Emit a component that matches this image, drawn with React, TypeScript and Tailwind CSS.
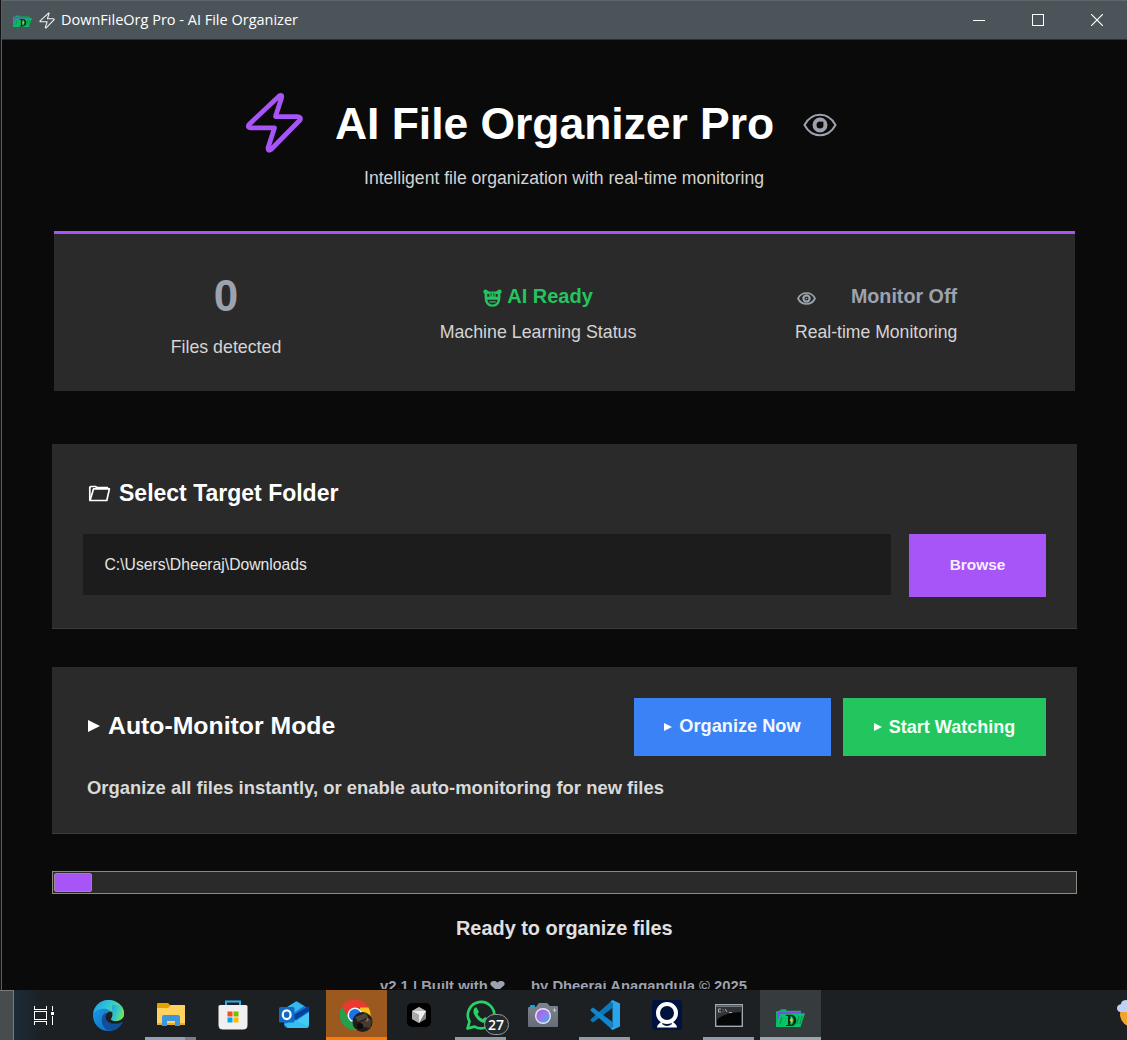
import React from "react";

function BoltIcon({ className, stroke, width }: { className: string; stroke: string; width: number }) {
  return (
    <svg className={className} viewBox="0 0 58 62" fill="none" stroke={stroke} strokeWidth={width} strokeLinejoin="round">
      <path d="M34.500 3.800 4 32.500Q2 35.500 5.500 35.800L29.500 35.800 23 56Q23 59.500 26 57.500L55 28Q56.500 25 52 24.600L30.500 24.600 36.500 6Q37.500 2.500 34.500 3.800Z" />
    </svg>
  );
}

function BigEye() {
  return (
    <svg className="h-[24px] w-[34px]" viewBox="0 0 34 24" fill="none" stroke="#9ca3af">
      <path d="M1.500 12C5 5.500 10.500 1.800 17 1.800S29 5.500 32.500 12C29 18.500 23.500 22.200 17 22.200S5 18.500 1.500 12Z" strokeWidth="2" />
      <circle cx="17" cy="12" r="5.500" strokeWidth="4" />
      <path d="M17.500 11.500 20 9" stroke="#0a0a0a" strokeWidth="2.400" />
    </svg>
  );
}

function SmallEye() {
  return (
    <svg className="h-[13px] w-[19px]" viewBox="0 0 19 13" fill="none" stroke="#9ca3af">
      <path d="M1 6.500C3 2.500 6 1 9.500 1S16 2.500 18 6.500C16 10.500 13 12 9.500 12S3 10.500 1 6.500Z" strokeWidth="1.700" />
      <circle cx="9.500" cy="6.500" r="3.100" strokeWidth="2.200" />
      <circle cx="9.500" cy="6.500" r=".8" fill="#9ca3af" stroke="none" />
    </svg>
  );
}

function BearIcon() {
  return (
    <svg className="h-[18px] w-[19px]" viewBox="0 0 19 18">
      <path fill="#22c55e" d="M.5 1.500Q2.500-.5 4.500 1.500L6 2.500H13L14.500 1.500Q16.500-.5 18.500 1.500 19 4 17.300 5.200 18.500 17.800 9.500 17.800T1.700 5.200Q0 4 .5 1.500Z" />
      <path fill="#2a2a2a" d="M4.300 5H6.300V7.800H4.300ZM14.700 5H12.700V7.800H14.700ZM4.300 10.800H14.700Q13.800 15.500 9.500 15.500T4.300 10.800ZM7.700 3.800H8.500V7.500H7.700ZM10.500 3.800H11.300V7.500H10.500Z" />
      <path fill="#22c55e" d="M6.300 12.300H12.700V13.500H6.300Z" />
    </svg>
  );
}

function FolderIcon() {
  return (
    <svg className="h-[17px] w-[23px]" viewBox="0 0 23 17" fill="none" stroke="#fff" strokeLinejoin="round">
      <path d="M1.800 15.500V2.200L3 1.500H7.500L9 2.700H19.500V4" strokeWidth="1.700" />
      <path d="M2 15.500 5.500 3.900H21.400L18.800 15.500Z" strokeWidth="1.700" />
    </svg>
  );
}

function Play({ className }: { className: string }) {
  return (
    <svg className={className} viewBox="0 0 12 12">
      <path d="M0 0 12 6 0 12Z" fill="#fff" />
    </svg>
  );
}

function AppFolder({ className }: { className: string }) {
  return (
    <svg className={className} viewBox="0 0 29 19">
      <path d="M0 2.500 4 1.500 5 .2H10L11 1.700H25V5L24 18H0Z" fill="#07b765" />
      <path d="M2 3H25V6H4L2 12Z" fill="#7c4bea" />
      <path d="M4 5.200 29 4.200 24.500 18H0Z" fill="#08c468" />
      <path d="M6 8 4 15M23 7 21 15M26 7 24 15" stroke="#079552" strokeWidth="1.300" />
      <path d="M10 5.800H15C22 5.800 22 17 15 17H10V16H12V7H10ZM14.500 7V16C18.500 16 18.500 7 14.500 7Z" fill="#042b1b" fillRule="evenodd" />
      <path d="M15.500 8 13.500 12H15L14.500 15 17.500 10.500H16Z" fill="#e6c744" />
    </svg>
  );
}

function EdgeIcon() {
  return (
    <svg className="size-[31px]" viewBox="0 0 32 32">
      <defs>
        <linearGradient id="edgeTop" x1="0" y1="0" x2="1" y2=".4">
          <stop offset="0" stopColor="#1b9de2" /><stop offset=".5" stopColor="#31c5d5" /><stop offset="1" stopColor="#70e64e" />
        </linearGradient>
        <linearGradient id="edgeLeft" x1="0" y1="0" x2="1" y2="1">
          <stop offset="0" stopColor="#1d9fe8" /><stop offset="1" stopColor="#0b64bd" />
        </linearGradient>
      </defs>
      <circle cx="16" cy="16" r="16" fill="url(#edgeLeft)" />
      <path d="M0 15C1 6 8 0 16 0 25 0 32 6.500 32 14 32 19 28 22 23 22 19 22 17.500 20.500 19 19 21 16 20 10 12 9 6 8.500 1.500 11 0 15Z" fill="url(#edgeTop)" />
      <path d="M13 13C8 16 7 25 14 31 22 33 28 28 30 23 20 27 12 23 13 13Z" fill="#114f9b" />
      <path d="M20 12.500C15 11 12.500 15 13 18 14 24 22 26.500 30 23L33 21V16Q29 22 23 22 18.500 21.500 19 19 20.500 17 20 12.500Z" fill="#1c2022" />
      <path d="M19.500 10C24 18 17 18 19 20.500 21 23 32 22 32 14Q32 9 29 6L20 5Z" fill="url(#edgeTop)" />
    </svg>
  );
}

function ExplorerIcon() {
  return (
    <svg className="h-[24px] w-[28px]" viewBox="0 0 28 24">
      <path d="M0 1Q0 0 1 0H11L13 2H27Q28 2 28 3V21H0Z" fill="#e5a100" />
      <path d="M0 5H11L14 2H27Q28 2 28 3V22H0Z" fill="#ffd260" />
      <path d="M0 20H28V22H0Z" fill="#e8ad2a" />
      <path d="M5 23V14Q5 12 7 12H21Q23 12 23 14V23H18V18H10V23Z" fill="#3b96dc" />
    </svg>
  );
}

function StoreIcon() {
  return (
    <svg className="h-[30px] w-[30px]" viewBox="0 0 30 30">
      <path d="M8 6V1.500H22V6" fill="none" stroke="#28b0ee" strokeWidth="2" />
      <path d="M2 5H28Q29.500 5 29.500 6.500V25Q29.500 29.500 25 29.500H5Q.5 29.500 .5 25V6.500Q.5 5 2 5Z" fill="#f0f0f1" />
      <path d="M9.500 11.500H14.500V16.500H9.500Z" fill="#f25022" /><path d="M15.500 11.500H20.500V16.500H15.500Z" fill="#7fba00" />
      <path d="M9.500 17.500H14.500V22.500H9.500Z" fill="#00a4ef" /><path d="M15.500 17.500H20.500V22.500H15.500Z" fill="#ffb900" />
    </svg>
  );
}

function OutlookIcon() {
  return (
    <svg className="h-[28px] w-[31px]" viewBox="0 0 31 28">
      <path d="M5 8 18 0 30 8V23Q30 27 26 27H9Q5 27 5 23Z" fill="#1378cd" />
      <path d="M5 8 17 .5 25 5 12 14Z" fill="#35b9ec" />
      <path d="M13 15 30 5V10L16 19Z" fill="#073f9a" />
      <path d="M8 26 30 11V23Q30 27 26 27H9Z" fill="#41cbf5" />
      <path d="M16 19 30 26Q28 27 26 27H9L5 23Z" fill="#38bdf0" />
      <rect x="0" y="6" width="15.500" height="15.500" rx="1.500" fill="#0f6cc5" />
      <ellipse cx="7.700" cy="13.700" rx="3.900" ry="4.400" fill="none" stroke="#fff" strokeWidth="2.200" />
    </svg>
  );
}

function ChromeIcon() {
  return (
    <svg className="h-[32px] w-[33px]" viewBox="0 0 33 32">
      <path d="M2 7A15 15 0 0 1 28 7H15L8.500 18Z" fill="#e83a30" />
      <path d="M28.500 7.500A15 15 0 0 1 15 30L21 18 20 7.500Z" fill="#fcc21b" />
      <path d="M2 7A15 15 0 0 0 15 30L19 21 9 18Z" fill="#269e4b" />
      <circle cx="15" cy="15" r="7.500" fill="#f7f7f7" /><circle cx="15" cy="15" r="6" fill="#1a73e8" />
      <circle cx="22.500" cy="22" r="10" fill="#231c18" />
      <path d="M15 17 26 13 28 17 18 22Z" fill="#4d4741" /><path d="M19 23 29 18 32 21 30 28 24 27Z" fill="#473a2e" />
      <path d="M27 17 29 20 26 22Z" fill="#8a7551" /><circle cx="20" cy="26" r="3" fill="#0c0c0d" />
    </svg>
  );
}

function CursorIcon() {
  return (
    <svg className="size-[24px]" viewBox="0 0 24 24">
      <rect width="24" height="24" rx="5" fill="#000" />
      <path d="M12 4 19 8V16L12 20 5 16V8Z" fill="#808080" />
      <path d="M12 4 19 8 12 10.500 5 8Z" fill="#b8b8b8" />
      <path d="M5 8H19L12 20V12Z" fill="#eee" /><path d="M5 8 12 12V20L5 16Z" fill="#aaa" />
    </svg>
  );
}

function WhatsAppIcon() {
  return (
    <svg className="size-[30px]" viewBox="0 0 30 30">
      <path d="M1.500 28.500 3.500 21.500A13.200 13.200 0 1 1 8.500 26.600Z" fill="none" stroke="#25d366" strokeWidth="2.700" strokeLinejoin="round" />
      <path d="M10.500 7.500 13 12 11.500 14Q13.500 18 17 19L19 17 23.500 19.500Q23 23 19 23 12 22.500 8 14 6.500 10 9 7.500Z" fill="#25d366" />
    </svg>
  );
}

function CameraIcon() {
  return (
    <svg className="h-[24px] w-[30px]" viewBox="0 0 30 24">
      <defs>
        <linearGradient id="lens" x1="0" y1="0" x2="1" y2="1"><stop offset="0" stopColor="#a55cdd" /><stop offset=".5" stopColor="#9a7af0" /><stop offset="1" stopColor="#23b5ec" /></linearGradient>
        <linearGradient id="cameraBody" x1="0" y1="0" x2="0" y2="1"><stop offset="0" stopColor="#7b858f" /><stop offset="1" stopColor="#676d78" /></linearGradient>
      </defs>
      <path d="M2 4V3Q2 2 3 2H6Q7 2 7 3V4Z" fill="#1ba3df" />
      <path d="M1 4H8L11 0H19L22 3H29Q30 3 30 4V23Q30 24 29 24H1Q0 24 0 23V5Q0 4 1 4Z" fill="url(#cameraBody)" />
      <circle cx="15" cy="13" r="8" fill="#e9e3f4" /><circle cx="15" cy="13" r="6.600" fill="url(#lens)" />
      <path d="M26.500 5.500V9M24.700 7.200H28.300" stroke="#c3cad0" strokeWidth="1" />
    </svg>
  );
}

function CodeIcon() {
  return (
    <svg className="size-[30px]" viewBox="0 0 30 30">
      <path d="M22 .5 1 19Q0 20 1 21L3 22.500 22.500 8Z" fill="#0879be" />
      <path d="M22 29.500 1 11Q0 10 1 9L3 7.500 22.500 22Z" fill="#1185cd" />
      <path d="M22.500 0 30 3.500V26.500L22.500 30 20.500 28.500 22.500 27V3L20.500 1.500Z" fill="#2aa5ed" />
    </svg>
  );
}

function SphereIcon() {
  return (
    <svg className="size-[30px]" viewBox="0 0 30 30">
      <rect width="30" height="30" rx="3" fill="#00133e" />
      <path d="M5 27.500Q5 24 11 21H19Q25 24 25 27.500Z" fill="#fff" />
      <path d="M10 24Q15 28 20 24L18 20H12Z" fill="#00133e" />
      <circle cx="15" cy="13" r="9" fill="none" stroke="#fff" strokeWidth="4" />
    </svg>
  );
}

function TerminalIcon() {
  return (
    <svg className="h-[23px] w-[28px]" viewBox="0 0 28 23">
      <rect x=".7" y=".7" width="26.600" height="21.600" fill="#050606" stroke="#a2a8af" strokeWidth="1.400" />
      <path d="M1.500 1.500H26.500V3H1.500Z" fill="#70777b" /><path d="M1.500 3H26.500V8Q10 8 1.500 16Z" fill="#303436" />
      <path d="M6 5H3.500V8H6M8 5.500V6.200M8 7.500V8.200M10 5 12 8M14 8.500H17" fill="none" stroke="#ccc" strokeWidth=".8" />
    </svg>
  );
}

function TaskViewIcon() {
  return (
    <svg className="h-[19px] w-[20px]" viewBox="0 0 20 19" fill="none" stroke="#fff" shapeRendering="crispEdges">
      <path d="M.5 0V3.500H12.500V0M.5 19V15.500H12.500V19M.5 5.500H12.500V13.500H.5ZM18.500 0V5M18.500 10V19" strokeWidth="1" />
      <path d="M17 6H20V9H17Z" fill="#fff" stroke="none" />
    </svg>
  );
}

function Task({ children, line }: { children?: React.ReactNode; line?: boolean }) {
  return (
    <div className="flex h-[50px] w-[61px] shrink-0 flex-col items-center">
      <div className="flex h-[47px] items-center justify-center pt-[3px]">{children}</div>
      {line && <div className="h-[3px] w-[51px] bg-[#8f9ca8]" />}
    </div>
  );
}

function TitleBar() {
  return (
    <header className="flex h-[40px] shrink-0 items-center border-t border-b border-t-[#5d676c] border-b-[#2b3033] bg-[#4b5459]">
      <AppFolder className="mt-[2px] ml-[11px] h-[13px] w-[19px] opacity-90" />
      <BoltIcon className="ml-[6px] h-[17px] w-[18px]" stroke="#f2f2f2" width={4} />
      <span className="ml-[5px] text-[14.500px] leading-[20px] whitespace-nowrap text-white [font-family:'Open_Sans','Noto_Sans',sans-serif]">DownFileOrg Pro - AI File Organizer</span>
      <div className="mr-[24px] ml-auto flex items-center gap-[47px]">
        <div className="h-px w-[12px] bg-white" />
        <div className="size-[12px] border border-white" />
        <svg className="size-[12px]" viewBox="0 0 12 12" stroke="#fff" strokeWidth="1.200"><path d="M0 0 12 12M12 0 0 12" /></svg>
      </div>
    </header>
  );
}

export default function App() {
  return (
    <div className="flex h-[1040px] w-[1127px] flex-col overflow-hidden bg-[#0a0a0a] [font-family:'Liberation_Sans',Arial,sans-serif]">
      <div className="flex h-[990px]">
        <div className="w-[2px] shrink-0 border-r border-[#5b5d5e] bg-[#111]" />
        <div className="flex w-[1125px] flex-col">
          <TitleBar />
          <main className="flex h-[950px] flex-col">
            <div className="flex h-[122px] shrink-0 items-start pl-[243px]">
              <BoltIcon className="mt-[52px] h-[62px] w-[58px] shrink-0" stroke="#a855f7" width={4.8} />
              <h1 className="mt-[58px] ml-[32px] w-[439px] text-[44.500px] leading-[52px] font-bold tracking-[-0.05px] whitespace-nowrap text-white">AI File Organizer Pro</h1>
              <div className="mt-[73px] ml-[29px]"><BigEye /></div>
            </div>
            <p className="ml-[362px] h-[30px] pt-[6px] text-[17.600px] leading-[20px] whitespace-nowrap text-[#d4d4d4]">Intelligent file organization with real-time monitoring</p>

            <section className="mt-[39px] ml-[52px] flex h-[160px] w-[1021px] shrink-0 border-t-[3px] border-[#a855f7] bg-[#2a2a2a] pl-[116px] whitespace-nowrap text-[#d4d4d4]">
              <div className="flex w-[112px] flex-col items-center">
                <div className="mt-[36px] text-[44px] leading-[52px] font-bold text-[#9ca3af]">0</div>
                <div className="mt-[15px] text-[17.800px] leading-[20px]">Files detected</div>
              </div>
              <div className="ml-[157px] flex w-[198px] flex-col items-center">
                <div className="mt-[50px] flex h-[24px] items-center gap-[5px] text-[20px] leading-[24px] font-bold text-[#22c55e]"><span className="mt-[4px]"><BearIcon /></span>AI Ready</div>
                <div className="mt-[14px] text-[17.800px] leading-[20px]">Machine Learning Status</div>
              </div>
              <div className="ml-[158px] flex w-[162px] flex-col">
                <div className="mt-[50px] flex h-[24px] items-center justify-between pl-[2px] text-[19.700px] leading-[24px] font-bold text-[#9ca3af]"><span className="mt-[5px]"><SmallEye /></span>Monitor Off</div>
                <div className="mt-[14px] text-[17.600px] leading-[20px]">Real-time Monitoring</div>
              </div>
            </section>

            <section className="mt-[53px] ml-[50px] h-[185px] w-[1025px] shrink-0 border-b border-[#3b3b3b] bg-[#2a2a2a] px-[31px] pt-[35px]">
              <h2 className="flex h-[28px] items-center gap-[8px] pl-[5px] text-[23px] leading-[28px] font-bold text-white"><FolderIcon />Select Target Folder</h2>
              <div className="mt-[27px] flex justify-between">
                <div className="flex h-[61px] w-[808px] items-center bg-[#1c1c1c] pl-[21.500px] text-[15.700px] text-[#e6e6e6]">C:\Users\Dheeraj\Downloads</div>
                <button className="h-[63px] w-[137px] bg-[#a855f7] pb-[2px] text-[15.400px] font-bold text-[#f5efff]">Browse</button>
              </div>
            </section>

            <section className="mt-[38px] ml-[50px] h-[167px] w-[1025px] shrink-0 border-b border-[#3b3b3b] bg-[#2a2a2a] px-[31px] pt-[31px]">
              <div className="flex items-center gap-[12px]">
                <h2 className="mr-auto -mt-[2px] flex items-center gap-[8px] pl-[5px] text-[24.800px] leading-[30px] font-bold text-white"><Play className="size-[12px]" />Auto-Monitor Mode</h2>
                <button className="flex h-[58px] w-[197px] items-center justify-center gap-[7px] bg-[#3b82f6] text-[18.200px] font-bold text-[#f3f7ff]"><Play className="size-[8px]" />Organize Now</button>
                <button className="flex h-[58px] w-[203px] items-center justify-center gap-[7px] bg-[#22c55e] text-[18px] font-bold text-[#f3fff7]"><Play className="size-[8px]" />Start Watching</button>
              </div>
              <p className="mt-[21px] ml-[4px] text-[18.430px] leading-[22px] font-bold whitespace-nowrap text-[#d9d9d9]">Organize all files instantly, or enable auto-monitoring for new files</p>
            </section>

            <div className="mt-[37px] ml-[50px] h-[23px] w-[1025px] shrink-0 border border-[#8f887e] bg-[#2a2a2a] p-px">
              <div className="h-full w-[38px] rounded-[2px] border border-[#9a8a9a] bg-[#a855f7]" />
            </div>
            <div className="mt-[22px] ml-[454px] text-[19.900px] leading-[24px] font-bold whitespace-nowrap text-[#e0e0e0]">Ready to organize files</div>
            <div className="mt-[41px] ml-[378px] flex h-[8px] w-[370px] shrink-0 overflow-hidden text-[14.800px] leading-[16px] font-bold whitespace-nowrap text-[#9ca3af]">
              <span className="-mt-[3px] w-[110px]">v2.1 | Built with</span>
              <svg className="h-[10px] w-[15px] shrink-0" viewBox="0 0 15 12" preserveAspectRatio="none"><path d="M7.500 12 1 5.500C-1.500 1 4-2 7.500 2 11-2 16.500 1 14 5.500Z" fill="#9ca3af" /></svg>
              <span className="-mt-[3px] ml-[26px]">by Dheeraj Anagandula © 2025</span>
            </div>
          </main>
        </div>
      </div>

      <footer className="flex h-[50px] w-[1127px] bg-[#1c2022]">
        <div className="w-[14px] shrink-0 border-t border-r border-[#777b7d] bg-[#484c4e]" />
        <div className="flex w-[60px] shrink-0 items-center justify-center bg-linear-to-r from-[#1a2b36] to-[#1c2022] to-50%"><TaskViewIcon /></div>
        <div className="ml-[4px] flex gap-px">
          <Task><EdgeIcon /></Task>
          <div className="flex h-[50px] w-[61px] flex-col items-center">
            <div className="flex h-[47px] items-center pt-[2px]"><ExplorerIcon /></div>
            <div className="flex h-[3px] w-[51px]"><div className="w-[40px] bg-[#94a1b4]" /><div className="w-[11px] bg-[#737f8d]" /></div>
          </div>
          <Task><StoreIcon /></Task>
          <Task><OutlookIcon /></Task>
          <div className="flex h-[50px] w-[61px] shrink-0 flex-col items-center border-b-[3px] border-[#ff7a00] bg-[#9b581f] pt-[10px]"><ChromeIcon /></div>
          <Task><CursorIcon /></Task>
          <Task line>
            <div className="relative">
              <WhatsAppIcon />
              <div className="absolute top-[14px] left-[18px] flex h-[21px] w-[25px] items-center justify-center rounded-full border border-[#969b9e] bg-[#24292b] text-[14px] leading-none font-semibold text-white [font-family:'Open_Sans',sans-serif]">27</div>
            </div>
          </Task>
          <Task><CameraIcon /></Task>
          <Task line><CodeIcon /></Task>
          <Task><SphereIcon /></Task>
          <Task line><TerminalIcon /></Task>
          <div className="flex h-[50px] w-[61px] shrink-0 flex-col items-center border-b-[3px] border-[#98a6b2] bg-[#363b3e] pt-[19px]"><AppFolder className="h-[19px] w-[29px]" /></div>
        </div>
        <svg className="mt-[10px] ml-auto h-[28px] w-[10px] shrink-0" viewBox="0 0 10 28"><circle cx="16" cy="14" r="13" fill="#f5a22b" /><path d="M10 0Q4 0 4 4 0 5 0 8 0 12 4 12H10Z" fill="#bcd2f5" /></svg>
      </footer>
    </div>
  );
}
